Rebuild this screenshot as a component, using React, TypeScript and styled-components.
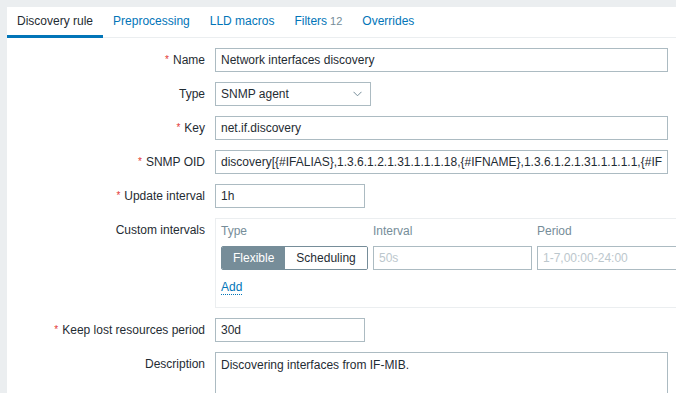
import React from 'react';
import styled, { createGlobalStyle } from 'styled-components';

const GlobalStyle = createGlobalStyle`
  html, body {
    margin: 0;
    padding: 0;
    background: #ebeef0;
    overflow: hidden;
  }
  body {
    font-family: Arial, "Liberation Sans", sans-serif;
    font-size: 12px;
    color: #1f2c33;
  }
`;

const Page = styled.div`
  padding: 7px 0 0 7px;
`;

const Panel = styled.div`
  background: #fff;
  width: 720px;
  min-height: 400px;
`;

const TabBar = styled.div`
  display: flex;
  border-bottom: 1px solid #ebeef0;
  height: 30px;
`;

const Tab = styled.div<{ $active?: boolean }>`
  padding: 0 10px;
  line-height: 29px;
  height: 28px;
  color: ${p => (p.$active ? '#1f2c33' : '#0275b8')};
  border-bottom: 3px solid ${p => (p.$active ? '#0275b8' : 'transparent')};
  white-space: nowrap;
`;

const Count = styled.span`
  color: #768d99;
  font-size: 11px;
  margin-left: 3px;
`;

const Form = styled.div`
  display: grid;
  grid-template-columns: 198px 1fr;
  column-gap: 10px;
  row-gap: 10px;
  padding-top: 10px;
`;

const Label = styled.div`
  height: 24px;
  text-align: right;
  line-height: 24px;
  white-space: nowrap;
`;

const Req = styled.span`
  color: #e33734;
  font-size: 10px;
  line-height: 10px;
  vertical-align: 1px;
  margin-right: 4px;
`;

const Field = styled.div`
  display: flex;
  align-items: flex-start;
`;

const Input = styled.div<{ $w: number; $muted?: boolean }>`
  box-sizing: border-box;
  width: ${p => p.$w}px;
  height: 24px;
  border: 1px solid #acbbc2;
  padding: 0 5px;
  line-height: 22px;
  color: ${p => (p.$muted ? '#bcc7cd' : '#1f2c33')};
  white-space: nowrap;
  overflow: hidden;
`;

const Select = styled(Input)`
  display: flex;
  align-items: center;
  justify-content: space-between;
  padding-right: 8px;
`;

const TextArea = styled(Input)`
  height: 70px;
  line-height: 14px;
  padding-top: 5px;
  white-space: normal;
`;

const IntervalsBox = styled.div`
  box-sizing: border-box;
  width: 480px;
  border: 1px solid #ebeef0;
  padding: 5px 5px 12px;
`;

const IntervalsGrid = styled.div`
  display: grid;
  grid-template-columns: 147px 159px 150px;
  column-gap: 5px;
  row-gap: 8px;
`;

const Head = styled.div`
  color: #768d99;
  line-height: 14px;
`;

const Segmented = styled.div`
  display: flex;
  height: 24px;
  box-sizing: border-box;
  border: 1px solid #768d99;
  border-radius: 2px;
  overflow: hidden;
`;

const Segment = styled.div<{ $on?: boolean }>`
  padding: 0 11px;
  line-height: 22px;
  background: ${p => (p.$on ? '#768d99' : '#fff')};
  color: ${p => (p.$on ? '#fff' : '#1f2c33')};
`;

const AddLink = styled.span`
  display: inline-block;
  margin-top: 11px;
  color: #0275b8;
  line-height: 13px;
  border-bottom: 1px dotted #0275b8;
`;

const Chevron = () => (
  <svg width="9" height="6" viewBox="0 0 9 6">
    <path d="M0.5 0.8 L4.5 4.8 L8.5 0.8" fill="none" stroke="#768d99" strokeWidth="1" />
  </svg>
);

const Row = ({ label, req, children }: { label: string; req?: boolean; children: React.ReactNode }) => (
  <>
    <Label>
      {req && <Req>*</Req>}
      {label}
    </Label>
    <Field>{children}</Field>
  </>
);

const App = () => {
  return (
    <Page>
      <GlobalStyle />
      <Panel>
        <TabBar>
          <Tab $active>Discovery rule</Tab>
          <Tab>Preprocessing</Tab>
          <Tab>LLD macros</Tab>
          <Tab>
            Filters<Count>12</Count>
          </Tab>
          <Tab>Overrides</Tab>
        </TabBar>

        <Form>
          <Row label="Name" req>
            <Input $w={453}>Network interfaces discovery</Input>
          </Row>
          <Row label="Type">
            <Select $w={156}>
              SNMP agent
              <Chevron />
            </Select>
          </Row>
          <Row label="Key" req>
            <Input $w={453}>net.if.discovery</Input>
          </Row>
          <Row label="SNMP OID" req>
            <Input $w={453}>
              discovery[{'{'}#IFALIAS{'}'},1.3.6.1.2.1.31.1.1.1.18,{'{'}#IFNAME{'}'},1.3.6.1.2.1.31.1.1.1.1,{'{'}#IF
            </Input>
          </Row>
          <Row label="Update interval" req>
            <Input $w={150}>1h</Input>
          </Row>
          <Row label="Custom intervals">
            <IntervalsBox>
              <IntervalsGrid>
                <Head>Type</Head>
                <Head>Interval</Head>
                <Head>Period</Head>
                <Segmented>
                  <Segment $on>Flexible</Segment>
                  <Segment>Scheduling</Segment>
                </Segmented>
                <Input $w={159} $muted>50s</Input>
                <Input $w={150} $muted>1-7,00:00-24:00</Input>
              </IntervalsGrid>
              <AddLink>Add</AddLink>
            </IntervalsBox>
          </Row>
          <Row label="Keep lost resources period" req>
            <Input $w={150}>30d</Input>
          </Row>
          <Row label="Description">
            <TextArea $w={453}>Discovering interfaces from IF-MIB.</TextArea>
          </Row>
        </Form>
      </Panel>
    </Page>
  );
};

export default App;
